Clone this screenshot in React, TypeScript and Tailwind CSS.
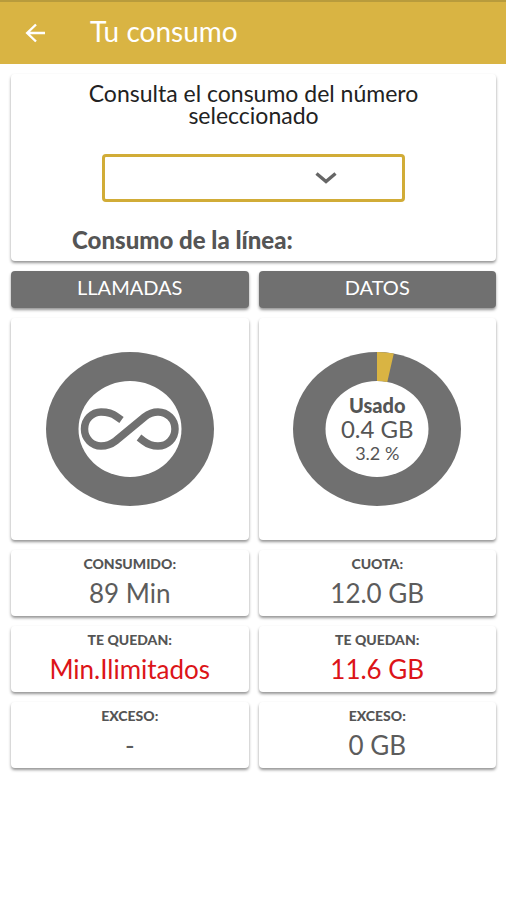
import React, { useState } from 'react';

type Stat = { label: string; value: string; highlight?: boolean };

const CALLS: Stat[] = [
  { label: 'CONSUMIDO:', value: '89 Min' },
  { label: 'TE QUEDAN:', value: 'Min.Ilimitados', highlight: true },
  { label: 'EXCESO:', value: '-' },
];

const DATA: Stat[] = [
  { label: 'CUOTA:', value: '12.0 GB' },
  { label: 'TE QUEDAN:', value: '11.6 GB', highlight: true },
  { label: 'EXCESO:', value: '0 GB' },
];

const CARD = 'rounded bg-white shadow-[0_2px_3px_rgba(0,0,0,0.42)]';

function Ring({ children }: { children?: React.ReactNode }) {
  return (
    <svg viewBox="0 0 168 154" className="h-[154px] w-[168px]" aria-hidden="true">
      <ellipse cx="84" cy="77" rx="84" ry="77" fill="#707070" />
      <ellipse cx="84" cy="77" rx="51.5" ry="48" fill="#fff" />
      {children}
    </svg>
  );
}

function StatCard({ label, value, highlight }: Stat) {
  return (
    <div className={`${CARD} h-[66px] pt-1 text-center`}>
      <dt className="text-sm leading-5 font-black text-[#555]">{label}</dt>
      <dd className={`text-[26px] leading-[38px] ${highlight ? 'text-[#dc1418]' : 'text-[#5c5c5c]'}`}>{value}</dd>
    </div>
  );
}

function Column({ title, stats, children }: { title: string; stats: Stat[]; children: React.ReactNode }) {
  return (
    <section className="flex min-w-0 flex-1 flex-col gap-[10px]">
      <h2 className="h-[37px] rounded bg-[#707070] text-center text-xl leading-8 text-white shadow-[0_2px_3px_rgba(0,0,0,0.42)]">
        {title}
      </h2>
      <div className={`${CARD} flex h-[222px] items-center justify-center`}>{children}</div>
      <dl className="flex flex-col gap-[10px]">
        {stats.map((s) => (
          <StatCard key={s.label} {...s} />
        ))}
      </dl>
    </section>
  );
}

export default function App() {
  const [line, setLine] = useState('');

  return (
    <div className="min-h-screen bg-white font-[Lato,sans-serif]">
      <header className="flex h-16 items-center border-t-2 border-[#b89b3c] bg-[#d9b443] px-6 text-white">
        <button type="button" aria-label="Volver" className="flex size-6 items-center justify-center">
          <svg viewBox="0 0 24 24" className="size-6" fill="none" stroke="currentColor" strokeWidth="2.4">
            <path d="M21 12H3M12 3.5L3.2 12L12 20.5" />
          </svg>
        </button>
        <h1 className="ml-[42px] pb-1 text-[28px] leading-8">Tu consumo</h1>
      </header>

      <main className="flex flex-col gap-[10px] py-[10px] pr-[10px] pl-[11px]">
        <section className={`${CARD} h-[187px] pt-2`}>
          <label htmlFor="line" className="mx-auto block max-w-[380px] text-center text-[23px] leading-[22px] text-[#222]">
            Consulta el consumo del número seleccionado
          </label>
          <div className="relative mx-auto mt-7 w-[303px]">
            <select
              id="line"
              value={line}
              onChange={(e) => setLine(e.target.value)}
              className="block h-12 w-full appearance-none rounded border-[3px] border-[#d1ac37] bg-white px-3 text-xl text-[#555]"
            >
              <option value=""></option>
            </select>
            <svg
              viewBox="0 0 22 12"
              className="pointer-events-none absolute top-[18px] right-[68px] h-3 w-[22px]"
              fill="none"
              stroke="#666"
              strokeWidth="3.4"
              aria-hidden="true"
            >
              <path d="M1.5 1.5L11 9.5L20.5 1.5" />
            </svg>
          </div>
          <p className="mt-6 pl-[61px] text-2xl leading-7 font-black text-[#555]">Consumo de la línea:</p>
        </section>

        <div className="flex gap-[10px]">
          <Column title="LLAMADAS" stats={CALLS}>
            <Ring>
              <path
                d="M75.5 68L70.5 64.5C66 61 61 60 55 60C46 60 38.5 67.5 38.5 77C38.5 86.5 46 94 55 94C61 94 65 92.5 69.5 89L98.5 65C103 61.5 107 60 112 60C121.500 60 129 67.5 129 77C129 86.5 121.5 94 112 94C106 94 102 92.5 97.5 89L93 85.5"
                fill="none"
                stroke="#707070"
                strokeWidth="7.5"
              />
            </Ring>
          </Column>
          <Column title="DATOS" stats={DATA}>
            <div className="grid place-items-center">
              <div className="col-start-1 row-start-1">
                <Ring>
                  <path d="M84 0A84 77 0 0 1 100.8 1.5L94.3 30A51.5 48 0 0 0 84 29Z" fill="#d9b443" />
                </Ring>
              </div>
              <div className="col-start-1 row-start-1 text-center text-[#555]">
                <p className="text-xl leading-6 font-black">Usado</p>
                <p className="text-2xl leading-6">0.4 GB</p>
                <p className="text-lg leading-6">3.2 %</p>
              </div>
            </div>
          </Column>
        </div>
      </main>
    </div>
  );
}
